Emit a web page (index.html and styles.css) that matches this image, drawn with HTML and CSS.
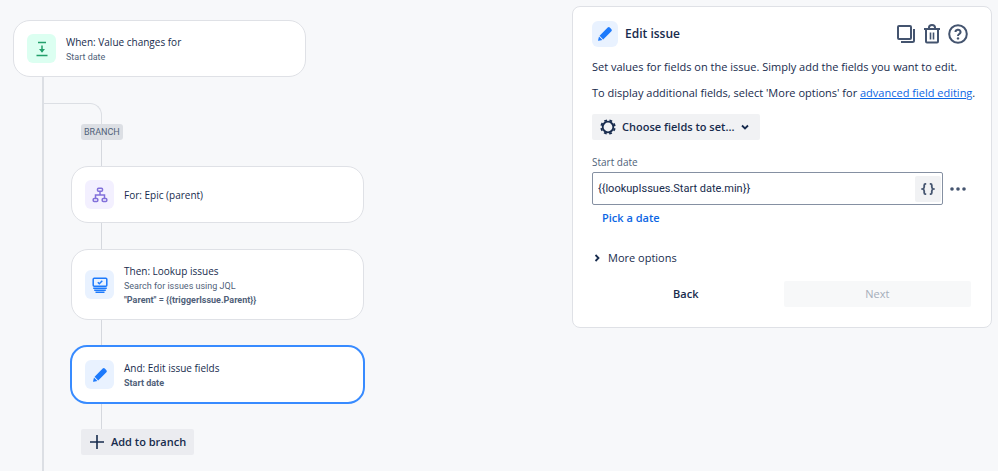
FILE: index.html
```html
<!DOCTYPE html>
<html lang="en">
<head>
  <meta charset="utf-8">
  <title>Automation rule</title>
  <link rel="stylesheet" href="styles.css">
</head>
<body>
  <main class="builder">
    <section class="flow">
      <button type="button" class="card">
        <span class="icon green">
          <svg width="16" height="16" viewBox="0 0 16 16" fill="none" stroke="currentColor" stroke-width="1.5">
            <path d="M4 1.5h8M2.5 14.5h11M8 4.500v6"/>
            <path d="M5 8h6L8 11.800z" fill="currentColor" stroke="none"/>
          </svg>
        </span>
        <span class="card-text">
          <span class="card-title">When: Value changes for</span>
          <span class="card-sub">Start date</span>
        </span>
      </button>

      <div class="branch">
        <div class="curve"></div>
        <span class="badge">BRANCH</span>
        <div class="link"></div>

        <button type="button" class="card">
          <span class="icon purple">
            <svg width="16" height="16" viewBox="0 0 16 16" fill="none" stroke="currentColor" stroke-width="1.5">
              <rect x="5.5" y="1.2" width="5" height="3" rx="1"/>
              <rect x="1.2" y="11.6" width="4.6" height="3" rx="1"/>
              <rect x="10.2" y="11.6" width="4.6" height="3" rx="1"/>
              <path d="M8 4.2V8M3.5 11.6V8h9v3.6"/>
            </svg>
          </span>
          <span class="card-text">
            <span class="card-title">For: Epic (parent)</span>
          </span>
        </button>
        <div class="link"></div>

        <button type="button" class="card tall">
          <span class="icon blue">
            <svg width="16" height="16" viewBox="0 0 16 16" fill="none" stroke="currentColor" stroke-width="1.5">
              <rect x="1.2" y="1.2" width="13.6" height="8" rx="1"/>
              <path d="M5.800 5.200l1.500 1.500 3-3M1.200 11.200h13.600M2.200 13.200h11.600M3.500 15.200h9"/>
            </svg>
          </span>
          <span class="card-text">
            <span class="card-title">Then: Lookup issues</span>
            <span class="card-sub">Search for issues using JQL</span>
            <span class="card-sub strong">"Parent" = {{triggerIssue.Parent}}</span>
          </span>
        </button>
        <div class="link"></div>

        <button type="button" class="card selected">
          <span class="icon blue">
            <svg width="16" height="16" viewBox="0 0 16 16" fill="currentColor">
              <path d="M10.700 1.600a1.500 1.500 0 0 1 2.100 0l1.600 1.600a1.500 1.500 0 0 1 0 2.100L6.200 13.400 2.600 9.800zM2 10.600l3.400 3.400-3.700.8a.5.5 0 0 1-.6-.6z"/>
            </svg>
          </span>
          <span class="card-text">
            <span class="card-title">And: Edit issue fields</span>
            <span class="card-sub strong">Start date</span>
          </span>
        </button>
        <div class="link"></div>

        <button type="button" class="btn add">
          <svg width="16" height="16" viewBox="0 0 16 16" fill="none" stroke="currentColor" stroke-width="1.6">
            <path d="M8 1v14M1 8h14"/>
          </svg>
          Add to branch
        </button>
      </div>
    </section>

    <aside class="panel">
      <header class="panel-head">
        <span class="icon blue small">
          <svg width="16" height="16" viewBox="0 0 16 16" fill="currentColor">
            <path d="M10.700 1.600a1.500 1.500 0 0 1 2.100 0l1.600 1.600a1.500 1.500 0 0 1 0 2.100L6.200 13.400 2.600 9.800zM2 10.600l3.400 3.400-3.700.8a.5.5 0 0 1-.6-.6z"/>
          </svg>
        </span>
        <h1>Edit issue</h1>
        <div class="tools">
          <button type="button" aria-label="Duplicate">
            <svg width="20" height="20" viewBox="0 0 20 20" fill="none" stroke="currentColor" stroke-width="2">
              <rect x="2" y="2" width="13" height="13" rx="1"/>
              <path d="M5 18h11.500a1.500 1.500 0 0 0 1.500-1.500V5"/>
            </svg>
          </button>
          <button type="button" aria-label="Delete">
            <svg width="20" height="20" viewBox="0 0 20 20" fill="none" stroke="currentColor" stroke-width="2">
              <path d="M2 5h16M4 5v12.500a1 1 0 0 0 1 1h10a1 1 0 0 0 1-1V5M7 5V3.500a3 2.500 0 0 1 6 0V5"/>
              <path d="M8.500 8.500v7M11.500 8.500v7" stroke-width="1.600"/>
            </svg>
          </button>
          <button type="button" aria-label="Help">
            <svg width="20" height="20" viewBox="0 0 20 20" fill="none" stroke="currentColor" stroke-width="2">
              <circle cx="10" cy="10" r="8.800"/>
              <path d="M7.500 8a2.500 2.300 0 1 1 3.700 2c-.8.450-1.200.8-1.200 1.900"/>
              <circle cx="10" cy="14.400" r="1.200" fill="currentColor" stroke="none"/>
            </svg>
          </button>
        </div>
      </header>

      <p>Set values for fields on the issue. Simply add the fields you want to edit.</p>
      <p>To display additional fields, select 'More options' for <a href="#">advanced field editing</a>.</p>

      <button type="button" class="btn choose">
        <svg width="16" height="16" viewBox="0 0 16 16" fill="none" stroke="currentColor">
          <circle cx="8" cy="8" r="5.300" stroke-width="1.800"/>
          <circle cx="8" cy="8" r="6.800" stroke-width="1.800" stroke-dasharray="2.800 2.541" stroke-dashoffset="-1.270"/>
        </svg>
        Choose fields to set...
        <svg class="chevron" width="10" height="10" viewBox="0 0 10 10" fill="none" stroke="currentColor" stroke-width="1.800">
          <path d="M2 3.500l3 3 3-3"/>
        </svg>
      </button>

      <form class="field">
        <label for="start-date">Start date</label>
        <div class="field-row">
          <div class="input-box">
            <input type="text" id="start-date" value="{{lookupIssues.Start date.min}}">
            <button type="button" class="smart" aria-label="Smart values">
              <svg width="14" height="14" viewBox="0 0 14 14" fill="none" stroke="currentColor" stroke-width="1.800">
                <path d="M5.200 1.800H4.500Q3.200 1.800 3.200 3.200V5Q3.200 6.500 1.500 7Q3.200 7.500 3.200 9v1.800q0 1.400 1.300 1.400h.7M8.800 1.800h.7q1.300 0 1.300 1.400V5q0 1.500 1.700 2-1.700.5-1.700 2v1.800q0 1.400-1.300 1.400h-.7"/>
              </svg>
            </button>
          </div>
          <button type="button" class="more" aria-label="Field actions">
            <svg width="16" height="16" viewBox="0 0 16 16" fill="currentColor">
              <circle cx="2" cy="8" r="1.800"/><circle cx="8" cy="8" r="1.800"/><circle cx="14" cy="8" r="1.800"/>
            </svg>
          </button>
        </div>
        <button type="button" class="pick">Pick a date</button>
      </form>

      <button type="button" class="options">
        <svg width="10" height="10" viewBox="0 0 10 10" fill="none" stroke="currentColor" stroke-width="1.800">
          <path d="M3.500 2l3 3-3 3"/>
        </svg>
        More options
      </button>

      <footer class="actions">
        <button type="button" class="btn back">Back</button>
        <button type="button" class="btn next" disabled>Next</button>
      </footer>
    </aside>
  </main>
</body>
</html>
```

FILE: styles.css
```css
* {
  box-sizing: border-box;
}
body {
  margin: 0;
  background: #f7f8fa;
  color: #172b4d;
  font-family: "Open Sans", "Noto Sans", sans-serif;
  font-size: 11px;
  line-height: 16px;
}
button, input {
  font: inherit;
  color: inherit;
  border: none;
  background: none;
  padding: 0;
  margin: 0;
}
button {
  cursor: pointer;
}
svg {
  display: block;
  flex: none;
}
.builder {
  display: flex;
  justify-content: space-between;
  align-items: flex-start;
  gap: 20px;
  min-height: 100vh;
  padding: 6px 6px 0 13px;
}

/* rule steps */
.flow {
  display: flex;
  flex-direction: column;
  align-self: stretch;
  padding-top: 14px;
}
.card {
  display: flex;
  align-items: center;
  gap: 10px;
  width: 293px;
  min-height: 57px;
  padding: 8px 13px;
  background: #fff;
  border: 1px solid #dfe1e6;
  border-radius: 17px;
  text-align: left;
}
.card.tall {
  min-height: 71px;
}
.card.selected {
  z-index: 1;
  width: 295px;
  min-height: 59px;
  margin: -1px;
  border: 2px solid #388bff;
}
.icon {
  display: flex;
  align-items: center;
  justify-content: center;
  flex: none;
  width: 29px;
  height: 29px;
  border-radius: 6px;
}
.icon.small {
  width: 26px;
  height: 26px;
}
.green {
  background: #dcfff1;
  color: #22a06b;
}
.purple {
  background: #f3f0ff;
  color: #8270db;
}
.blue {
  background: #e9f2ff;
  color: #1d7afc;
}
.card-text {
  display: flex;
  flex-direction: column;
}
.card-title {
  font-size: 10px;
}
.card-sub {
  color: #505f79;
  font-family: Roboto, sans-serif;
  font-size: 9px;
  line-height: 14px;
}
.strong {
  font-weight: 700;
}
.branch {
  display: flex;
  flex-direction: column;
  align-items: flex-start;
  flex: 1;
  margin-left: 29px;
  padding: 26px 0 16px 27px;
  border-left: 2px solid #dcdfe4;
}
.curve {
  width: 58px;
  height: 21px;
  margin-left: -27px;
  border: solid #dcdfe4;
  border-width: 1px 1px 0 0;
  border-top-right-radius: 12px;
}
.badge {
  margin-left: 10px;
  padding: 0 3px;
  border-radius: 3px;
  background: #dcdfe4;
  color: #505f79;
  font-family: Roboto, sans-serif;
  font-size: 9px;
}
.link {
  width: 1px;
  height: 26px;
  margin-left: 30px;
  background: #d5d8de;
}
.btn {
  display: flex;
  align-items: center;
  justify-content: center;
  gap: 6px;
  height: 26px;
  padding: 0 8px;
  border-radius: 2px;
  font-weight: 600;
}
.add {
  margin-left: 10px;
  background: #ebecf0;
}

/* settings panel */
.panel {
  display: flex;
  flex-direction: column;
  align-items: stretch;
  flex: 0 1 420px;
  padding: 14px 20px 20px 19px;
  background: #fff;
  border: 1px solid #dfe1e6;
  border-radius: 8px;
}
.panel-head {
  display: flex;
  align-items: center;
  gap: 7px;
  margin-bottom: 12px;
}
.panel h1 {
  flex: 1;
  margin: 0;
  font-size: 12px;
  font-weight: 600;
}
.tools {
  display: flex;
  gap: 6px;
  padding-right: 3px;
  color: #44546f;
}
.panel p {
  margin: 0 -12px 10px 0;
}
a {
  color: #0c66e4;
}
.choose {
  align-self: flex-start;
  margin-top: 3px;
  background: #f1f2f4;
}
.chevron {
  margin: 0 2px 0 0;
}
.field {
  display: flex;
  flex-direction: column;
  margin-top: 14px;
}
.field label {
  margin-bottom: 2px;
  color: #505f79;
  font-size: 10px;
}
.field-row {
  display: flex;
  align-items: center;
  gap: 7px;
}
.input-box {
  display: flex;
  align-items: center;
  flex: 1;
  height: 33px;
  padding: 0 1px 0 5px;
  border: 1px solid #8590a2;
  border-radius: 2px;
}
.input-box input {
  flex: 1;
  min-width: 0;
  outline: none;
  font-family: Roboto, sans-serif;
}
.smart {
  display: flex;
  align-items: center;
  justify-content: center;
  width: 26px;
  height: 26px;
  border-radius: 2px;
  background: #f1f2f4;
  color: #44546f;
}
.more {
  margin-right: 5px;
  color: #44546f;
}
.pick {
  align-self: flex-start;
  margin: 5px 0 0 10px;
  color: #0c66e4;
  font-weight: 600;
}
.options {
  display: flex;
  align-items: center;
  align-self: flex-start;
  gap: 6px;
  margin-top: 24px;
}
.actions {
  display: grid;
  grid-template-columns: 1fr 1fr;
  gap: 4px;
  margin-top: 15px;
}
.next {
  background: #f7f8f9;
  color: #a5adba;
  font-weight: 400;
  cursor: default;
}
```
